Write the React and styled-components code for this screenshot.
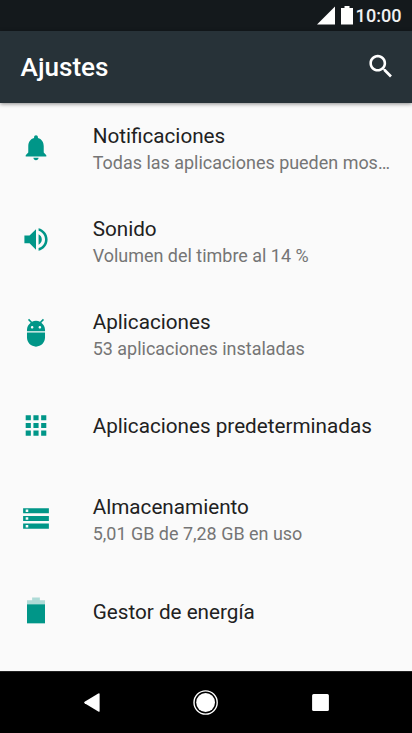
import React from "react";
import styled, { createGlobalStyle } from "styled-components";

const GlobalStyle = createGlobalStyle`
  * { box-sizing: border-box; }
  body { margin: 0; background: #000; overflow: hidden; }
`;

const Screen = styled.div`
  width: 412px;
  height: 733px;
  display: flex;
  flex-direction: column;
  overflow: hidden;
  background: #fafafa;
  font-family: Roboto, sans-serif;
`;

const StatusBar = styled.div`
  flex: 0 0 31px;
  display: flex;
  align-items: center;
  justify-content: flex-end;
  padding-right: 10.5px;
  background: #14191c;
  color: #fff;
`;

const StatusIcons = styled.svg`
  width: 37px;
  height: 20px;
  margin-right: 1.5px;
  display: block;
`;

const Clock = styled.span`
  font-size: 18.1px;
  line-height: 22px;
  font-weight: 500;
  padding-top: 1px;
  color: #f0f1f1;
`;

const AppBar = styled.header`
  flex: 0 0 72px;
  display: flex;
  align-items: center;
  justify-content: space-between;
  padding: 0 15px 0 20.6px;
  background: #273238;
  color: #fff;
  box-shadow: 0 1px 4px rgba(0, 0, 0, 0.45);
  z-index: 1;
`;

const Title = styled.h1`
  margin: 0;
  font-size: 26.1px;
  line-height: 30px;
  font-weight: 500;
`;

const Icon = styled.svg`
  width: 32px;
  height: 32px;
  flex: none;
  display: block;
  fill: ${(p) => p.$color};
`;

const List = styled.main`
  flex: 1 1 0;
  min-height: 0;
  overflow: hidden;
  margin-top: -1.7px;
`;

const Row = styled.div`
  height: 92.75px;
  display: flex;
  align-items: center;
  gap: 40.7px;
  padding: 0 18px 0 20px;
`;

const RowText = styled.div`
  flex: 1;
  min-width: 0;
  padding-top: ${(p) => (p.$twoLine ? "4.4px" : "1.2px")};
`;

const RowTitle = styled.div`
  font-size: 20.68px;
  line-height: 27px;
  color: #212121;
  white-space: nowrap;
`;

const RowSummary = styled.div`
  font-size: 17.97px;
  line-height: 26px;
  color: #757575;
  white-space: nowrap;
`;

const NavBar = styled.nav`
  flex: 0 0 62px;
  display: flex;
  align-items: center;
  justify-content: center;
  background: #000;
  border-top: 1px solid #222;
`;

const NavIcon = styled.svg`
  width: 31px;
  height: 31px;
  margin: 0 42px;
  fill: #fff;
`;

const teal = "#009688";
const iconBox = "-0.42 0 24.84 24.84";

const items = [
  {
    title: "Notificaciones",
    summary: "Todas las aplicaciones pueden mos…",
    icon: <path d="M12 22c1.1 0 2-.9 2-2h-4c0 1.1.89 2 2 2zm6-6v-5c0-3.07-1.64-5.64-4.5-6.32V4c0-.83-.67-1.5-1.5-1.5s-1.5.67-1.5 1.5v.68C7.63 5.36 6 7.92 6 11v5l-2 2v1h16v-1l-2-2z" />,
  },
  {
    title: "Sonido",
    summary: "Volumen del timbre al 14 %",
    icon: <path d="M3 9v6h4l5 5V4L7 9H3zm13.5 3c0-1.77-1.02-3.29-2.5-4.03v8.05c1.48-.73 2.5-2.25 2.5-4.02zM14 3.23v2.06c2.89.86 5 3.54 5 6.71s-2.11 5.85-5 6.71v2.06c4.01-.91 7-4.49 7-8.77s-2.99-7.86-7-8.77z" />,
  },
  {
    title: "Aplicaciones",
    summary: "53 aplicaciones instaladas",
    icon: <path d="M5 16c0 3.87 3.13 7 7 7s7-3.13 7-7v-4H5v4zM16.12 4.37l2.1-2.1-.82-.83-2.3 2.31C14.16 3.28 13.12 3 12 3s-2.16.28-3.09.75L6.6 1.44l-.82.83 2.1 2.1C6.14 5.64 5 7.68 5 10v1h14v-1c0-2.32-1.14-4.36-2.88-5.63zM9 9c-.55 0-1-.45-1-1s.45-1 1-1 1 .45 1 1-.45 1-1 1zm6 0c-.55 0-1-.45-1-1s.45-1 1-1 1 .45 1 1-.45 1-1 1z" />,
  },
  {
    title: "Aplicaciones predeterminadas",
    icon: <path d="M4 8h4V4H4v4zm6 12h4v-4h-4v4zm-6 0h4v-4H4v4zm0-6h4v-4H4v4zm6 0h4v-4h-4v4zm6-10v4h4V4h-4zm-6 4h4V4h-4v4zm6 6h4v-4h-4v4zm0 6h4v-4h-4v4z" />,
  },
  {
    title: "Almacenamiento",
    summary: "5,01 GB de 7,28 GB en uso",
    icon: <path d="M2 20h20v-4H2v4zm2-3h2v2H4v-2zM2 4v4h20V4H2zm4 3H4V5h2v2zm-4 7h20v-4H2v4zm2-3h2v2H4v-2z" />,
  },
  {
    title: "Gestor de energía",
    icon: (
      <>
        <path fillOpacity=".3" d="M9 2h6v2h4v3.2H5V4h4z" />
        <path d="M5 7.2h14V22H5z" />
      </>
    ),
  },
];

export default function App() {
  return (
    <Screen>
      <GlobalStyle />
      <StatusBar>
        <StatusIcons viewBox="0 0 37 20" fill="#fff">
          <path d="M0 18.5 18 .5v18z" />
          <path d="M24 2h3.5V0h5v2H36v16.5H24z" />
        </StatusIcons>
        <Clock>10:00</Clock>
      </StatusBar>
      <AppBar>
        <Title>Ajustes</Title>
        <Icon $color="#fff" viewBox={iconBox}>
          <path d="M15.5 14h-.79l-.28-.27C15.41 12.59 16 11.11 16 9.5 16 5.91 13.09 3 9.5 3S3 5.91 3 9.5 5.91 16 9.5 16c1.61 0 3.09-.59 4.23-1.57l.27.28v.79l5 4.99L20.49 19l-4.99-5zm-6 0C7.01 14 5 11.99 5 9.5S7.01 5 9.5 5 14 7.01 14 9.5 11.99 14 9.5 14z" />
        </Icon>
      </AppBar>
      <List>
        {items.map((item) => (
          <Row key={item.title}>
            <Icon $color={teal} viewBox={iconBox}>{item.icon}</Icon>
            <RowText $twoLine={Boolean(item.summary)}>
              <RowTitle>{item.title}</RowTitle>
              {item.summary && <RowSummary>{item.summary}</RowSummary>}
            </RowText>
          </Row>
        ))}
      </List>
      <NavBar>
        <NavIcon viewBox="0 0 31 31">
          <path d="M8.6 14.7a1 1 0 0 0 0 1.6L22.3 24.6q1.3.6 1.3-.7V7.2q0-1.3-1.3-.6z" />
        </NavIcon>
        <NavIcon viewBox="0 0 31 31">
          <circle cx="14.6" cy="15.5" r="9.4" />
          <circle cx="14.6" cy="15.5" r="11.6" fill="none" stroke="#fff" strokeWidth="1.4" />
        </NavIcon>
        <NavIcon viewBox="0 0 31 31">
          <rect x="6.1" y="7.1" width="16.8" height="16.8" rx="1.5" />
        </NavIcon>
      </NavBar>
    </Screen>
  );
}
